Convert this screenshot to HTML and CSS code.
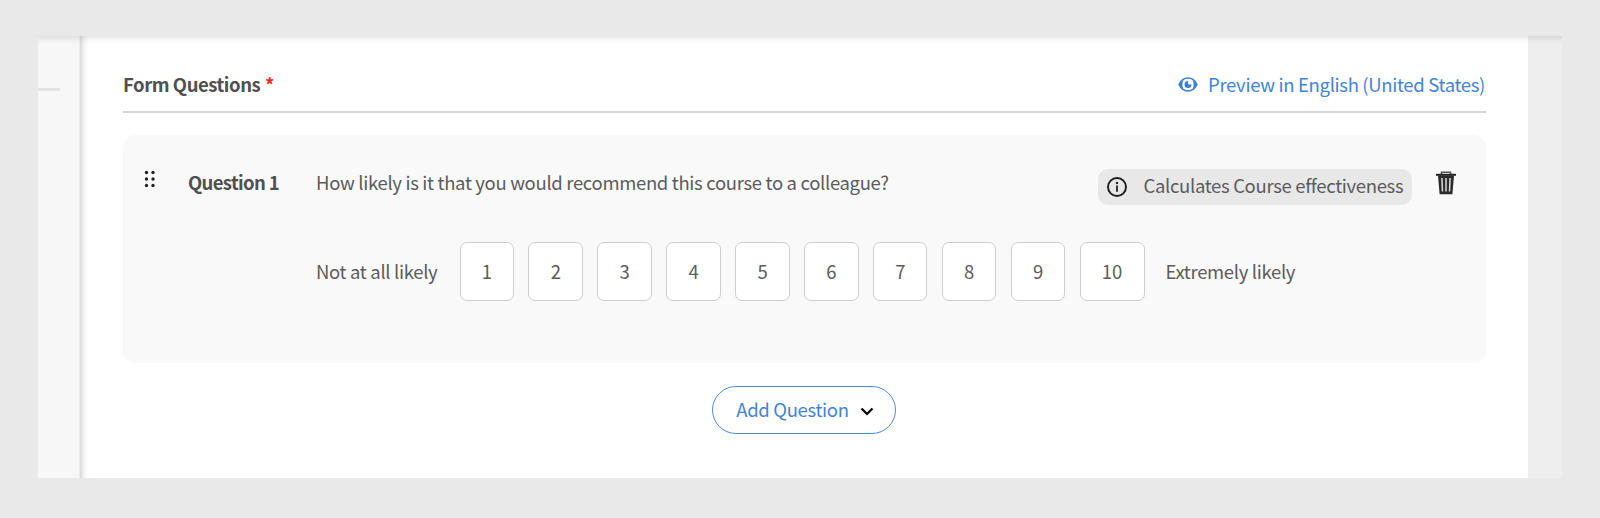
FILE: index.html
```html
<!DOCTYPE html>
<html lang="en">
<head>
<meta charset="utf-8">
<title>Form Questions</title>
<link rel="stylesheet" href="styles.css">
</head>
<body>
<div class="frame">
  <aside class="side"><div class="side-rule"></div></aside>
  <main class="main">
    <header class="head">
      <h2 class="title">Form Questions <span class="req">*</span></h2>
      <a class="preview">
        <svg class="eye" viewBox="0 0 20 15" width="20" height="15"><path d="M1 7.500C3 3.300 6.300 1.100 10 1.100S17 3.300 19 7.500C17 11.700 13.700 13.900 10 13.900S3 11.700 1 7.500Z" fill="none" stroke="#3b7fd4" stroke-width="1.500"/><path d="M5.600 2.800C3.900 5.500 3.900 9.500 5.600 12.200L3 10.500 1 7.500 3 4.500ZM14.400 2.800C16.100 5.500 16.100 9.500 14.400 12.200L17 10.500 19 7.500 17 4.500Z" fill="#3b7fd4"/><path d="M10 4a3.500 3.500 0 1 0 3.500 3.500h-2a1.500 1.500 0 0 1-1.500-1.500Z" fill="#3b7fd4"/></svg>
        <span class="preview-text">Preview in English (United States)</span>
      </a>
    </header>
    <section class="card">
      <div class="row">
        <svg class="grip" viewBox="0 0 12 18" width="12" height="18" fill="#222"><circle cx="2.500" cy="2.500" r="1.700"/><circle cx="9" cy="2.500" r="1.700"/><circle cx="2.500" cy="9" r="1.700"/><circle cx="9" cy="9" r="1.700"/><circle cx="2.500" cy="15.500" r="1.700"/><circle cx="9" cy="15.500" r="1.700"/></svg>
        <h3 class="qnum">Question 1</h3>
        <p class="qtext">How likely is it that you would recommend this course to a colleague?</p>
        <div class="chip">
          <svg viewBox="0 0 20 20" width="20" height="20"><circle cx="10" cy="10" r="9" fill="none" stroke="#1c1c1c" stroke-width="1.900"/><circle cx="10" cy="6" r="1.200" fill="#222"/><path d="M10 8.600v6.200" stroke="#222" stroke-width="1.800"/></svg>
          <span class="chip-text">Calculates Course effectiveness</span>
        </div>
        <svg class="trash" viewBox="0 0 22 24" width="22" height="24"><path d="M6.500 3V1.300h9V3" fill="none" stroke="#555" stroke-width="1.600"/><path d="M1 2.800h20v2H1z" fill="#222"/><path d="M3 4.500h16l-1.600 18.700H4.600Z" fill="#2b2b2b"/><path d="M6.900 7l.6 13.500M11 7v13.500M15.100 7l-.6 13.500" stroke="#ddd" stroke-width="1.500"/></svg>
      </div>
      <div class="scale">
        <span class="low">Not at all likely</span>
        <div class="opts">
          <span class="opt">1</span><span class="opt">2</span><span class="opt">3</span><span class="opt">4</span><span class="opt">5</span><span class="opt">6</span><span class="opt">7</span><span class="opt">8</span><span class="opt">9</span><span class="opt wide">10</span>
        </div>
        <span class="high">Extremely likely</span>
      </div>
    </section>
    <button class="add"><span class="add-text">Add Question</span>
      <svg class="chevron" viewBox="0 0 14 9" width="14" height="9"><path d="M1.500 1.500 7 7l5.500-5.500" fill="none" stroke="#000" stroke-width="2.200"/></svg>
    </button>
  </main>
  <div class="gutter"></div>
</div>
</body>
</html>
```
FILE: styles.css
```css
* { box-sizing: border-box; }
body {
  margin: 0;
  height: 518px;
  padding: 36px 38px 40px;
  background: #e9e9e9;
  color: #5c5c5c;
  font: 18.5px/28px "Noto Sans CJK SC", "Noto Sans", sans-serif;
  letter-spacing: -.33px;
  white-space: nowrap;
  overflow: hidden;
}
h2, h3, p { margin: 0; font-size: inherit; }
.frame { position: relative; display: flex; height: 442px; }
.frame::after {
  content: "";
  position: absolute;
  inset: 0 0 auto;
  height: 9px;
  background: linear-gradient(rgba(0,0,0,.09), rgba(0,0,0,.025) 55%, transparent);
}
.side { width: 42px; background: #f7f7f7; padding-top: 52px; border-right: 1px solid #ececec; }
.side-rule { width: 22px; height: 3px; background: #e4e4e4; }
.main {
  width: 1448px;
  padding: 34px 42.5px 0 43px;
  background: linear-gradient(90deg, #d8d8d8, #eee 3px, #fafafa 6px, #fff 9px);
}
.gutter { width: 34px; background: #eee; }
.head {
  display: flex;
  justify-content: space-between;
  height: 43px;
  border-bottom: 2px solid #d6d6d6;
}
.title { font-weight: 700; color: #505050; letter-spacing: -.46px; }
.req { display: inline-block; margin-left: 1px; line-height: 1; color: #f22; }
.preview { display: flex; align-items: center; gap: 10px; height: 28px; color: #4384d8; }
.preview-text { margin-right: .5px; }
.card {
  height: 228px;
  margin-top: 22px;
  padding: 33px 29px 0 20px;
  border-radius: 12px;
  background: #f9f9f9;
}
.row { display: flex; height: 38px; }
.grip { margin: 2px 32px 0 1px; }
.qnum { width: 128px; font-weight: 700; color: #505050; letter-spacing: -.65px; }
.qtext { flex: 1; }
.chip {
  display: flex;
  align-items: center;
  gap: 16px;
  width: 314px;
  height: 36px;
  margin-top: 1px;
  padding-left: 9px;
  border-radius: 10px;
  background: #e8e8e8;
}
.chip-text { padding: 0 0 4px 1px; }
.trash { margin: 3px 0 0 23px; }
.scale { display: flex; align-items: center; height: 60px; margin: 35px 0 0 173px; }
.low { width: 143.5px; }
.opts { display: flex; gap: 14.3px; margin-right: 21px; }
.opt {
  display: grid;
  place-items: center;
  width: 54.6px;
  height: 59px;
  border: 1px solid #cdcdcd;
  border-radius: 7px;
  background: #fff;
}
.wide { width: 65px; letter-spacing: 0; }
.add {
  display: flex;
  align-items: center;
  gap: 11px;
  width: 184px;
  height: 48px;
  margin: 23px auto 0;
  padding: 0 0 0 23px;
  border: 1px solid #4d8bdb;
  border-radius: 24px;
  background: #fff;
  color: #4384d8;
  font: inherit;
  letter-spacing: inherit;
}
.add-text { padding-bottom: 2px; }
.chevron { margin-top: 2px; }
```
